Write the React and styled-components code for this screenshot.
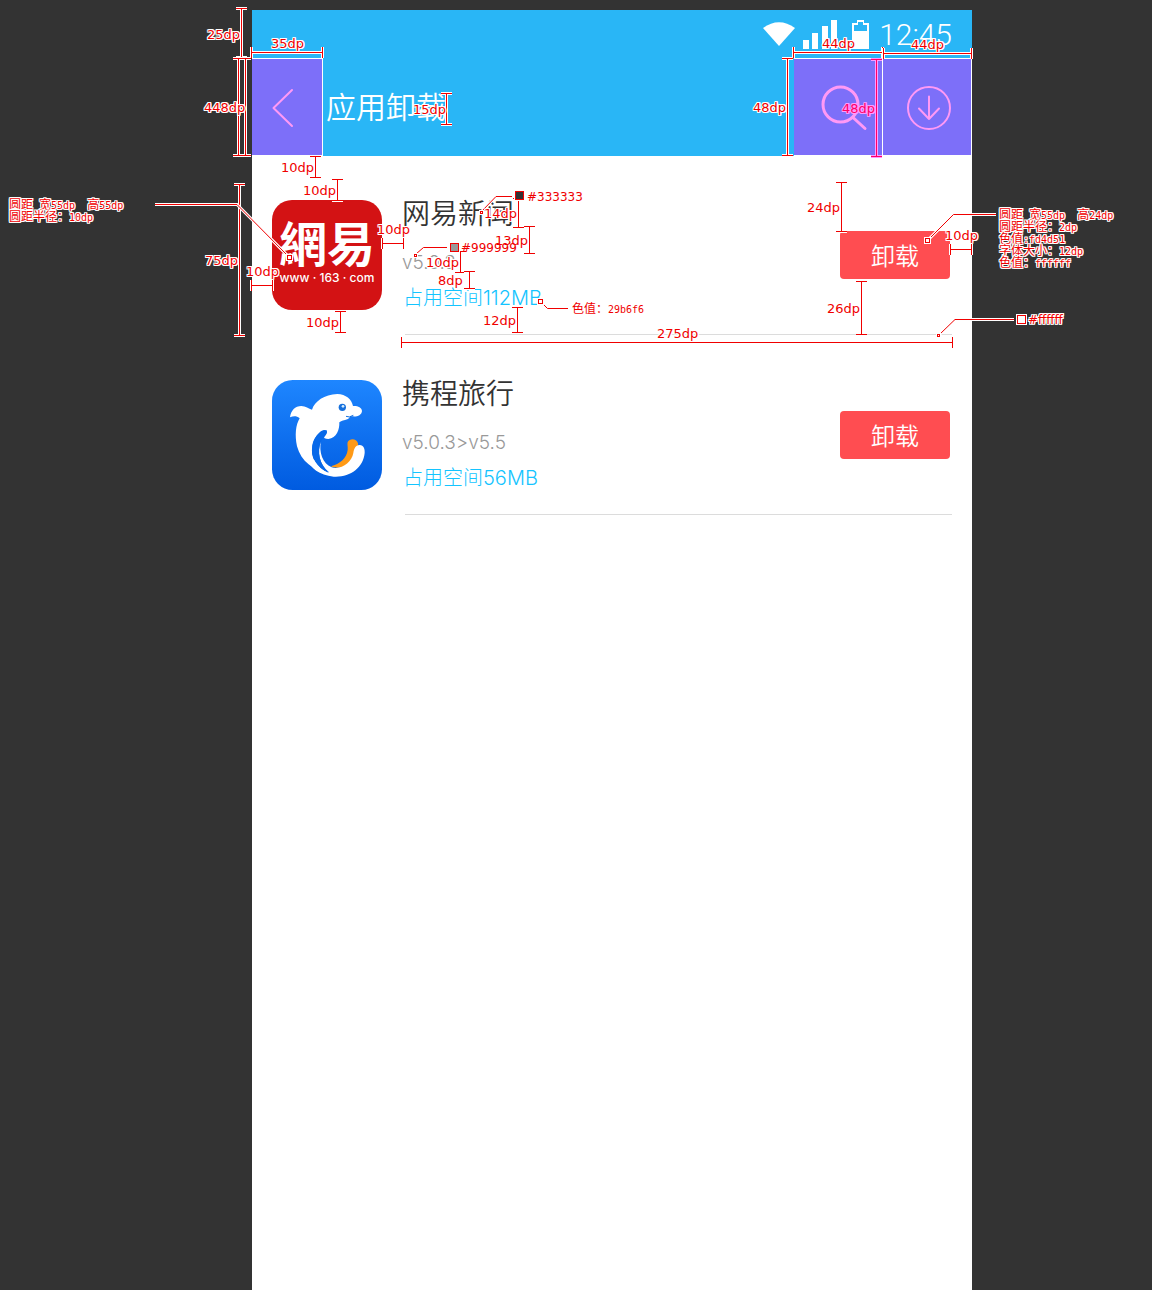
import React from "react";
import styled, { createGlobalStyle, css } from "styled-components";

const GlobalStyle = createGlobalStyle`
  *, *::before, *::after { box-sizing: border-box; }
  body { margin: 0; background: #333333; }
  h1, h2, p, ul { margin: 0; padding: 0; font-weight: 400; }
  button { border: 0; padding: 0; font: inherit; cursor: pointer; }
`;

const sans = `"Noto Sans CJK SC", "Noto Sans", sans-serif`;
const mixed = `Inter, "Noto Sans CJK SC", sans-serif`;

/* ---------- app screen ---------- */

const Page = styled.div`
  position: relative;
  min-height: 100vh;
  min-width: 900px;
  display: flex;
  padding: 10px 180px 0 252px;
  overflow: hidden;
  font-family: ${sans};
`;

const Screen = styled.main`
  flex: 1;
  min-width: 0;
  background: #ffffff;
`;

const Header = styled.header`
  margin-bottom: -1px;
  background: #29b6f6;
`;

const StatusBar = styled.div`
  display: flex;
  justify-content: flex-end;
  align-items: center;
  height: 48px;
  padding: 2px 20px 0 0;
  color: #ffffff;
`;

const Clock = styled.time`
  margin-left: 9px;
  font: 300 30px/46px Roboto, sans-serif;
`;

const NavBar = styled.div`
  display: flex;
  height: 98px;
`;

const NavButton = styled.button`
  display: flex;
  align-items: center;
  justify-content: center;
  width: ${(p) => p.$width}px;
  padding: 2px 0 0 ${(p) => p.$inset || 0}px;
  background: #7d6ff9;
  border: solid #ffffff;
  border-width: 1px 1px 1px 0;
`;

const BackButton = styled(NavButton)`
  justify-content: flex-start;
`;

const ScreenTitle = styled.h1`
  flex: 1;
  padding-left: 3px;
  color: #ffffff;
  font-size: 30px;
  font-weight: 350;
  line-height: 94px;
`;

const AppList = styled.ul`
  list-style: none;
`;

const AppRow = styled.li`
  display: grid;
  grid-template-columns: 110px 1fr auto;
  column-gap: 20px;
  padding: 45px 20px 0;
`;

const AppInfo = styled.div`
  display: flex;
  flex-direction: column;
`;

const AppName = styled.h2`
  color: #333333;
  font-size: 28px;
  font-weight: 350;
  line-height: 24px;
`;

const Version = styled.p`
  margin-top: 29px;
  color: #999999;
  font: 300 19px/20px ${mixed};
`;

const Space = styled.p`
  margin-top: 15px;
  padding-left: 1px;
  color: #14c4ff;
  font: 300 20px/20px ${mixed};
`;

const UninstallButton = styled.button`
  align-self: center;
  width: 110px;
  height: 48px;
  margin-right: 2px;
  border-radius: 4px;
  background: #ff4d51;
  color: #ffffff;
  font-size: 24px;
  font-weight: 350;
  line-height: 48px;
`;

const Divider = styled.hr`
  grid-column: 2 / -1;
  width: auto;
  height: 1px;
  margin: 24px 0 0 3px;
  border: 0;
  background: #dcdcdc;
`;

const NewsLogo = styled.div`
  display: flex;
  flex-direction: column;
  align-items: center;
  height: 110px;
  padding-top: 16px;
  border-radius: 20px;
  background: #d31214;
  color: #ffffff;
`;

const NewsMark = styled.span`
  font: 700 48px/50px "Noto Sans CJK TC", sans-serif;
`;

const NewsUrl = styled.span`
  margin-top: 3px;
  font: 500 12px/18px Inter, sans-serif;
  white-space: pre;
`;

const TravelLogo = styled.svg`
  display: block;
  width: 110px;
  height: 110px;
`;

/* ---------- measurement overlay ---------- */

const Layer = styled.div`
  position: absolute;
  top: 0;
  ${(p) => (p.$anchor === "right" ? "right: 0;" : "left: 0;")}
  width: 1152px;
  height: 400px;
  pointer-events: none;
`;

const Lines = styled.svg`
  position: absolute;
  inset: 0;
  width: 100%;
  height: 100%;
`;

const halo = (c) => css`
  text-shadow: 1px 0 ${c}, -1px 0 ${c}, 0 1px ${c}, 0 -1px ${c},
    1px 1px ${c}, -1px 1px ${c}, 1px -1px ${c}, -1px -1px ${c};
`;

const Label = styled.span`
  position: absolute;
  left: ${(p) => p.$x}px;
  top: ${(p) => p.$y - 8}px;
  color: ${(p) => (p.$accent ? "#ff0066" : "#f00000")};
  font: 400 ${(p) => p.$size || 13}px/16px "DejaVu Sans", sans-serif;
  white-space: pre;
  ${(p) => !p.$plain && halo(p.$accent ? "#ff99ff" : "#ffffff")}
`;

const Note = styled.div`
  position: absolute;
  left: ${(p) => p.$x}px;
  top: ${(p) => p.$y}px;
  color: #f00000;
  font: 400 12px/12px "Noto Sans CJK SC", sans-serif;
  white-space: pre;
  ${halo("#ffffff")}
`;

const NoteLine = styled.div`
  height: 12px;
`;

const Code = styled.span`
  font: 400 10px/12px "DejaVu Sans Mono", monospace;
`;

const V = (x, y1, y2) => `M${x} ${y1}V${y2}M${x - 5.5} ${y1}H${x + 5.5}M${x - 5.5} ${y2}H${x + 5.5}`;
const H = (y, x1, x2) => `M${x1} ${y}H${x2}M${x1} ${y - 5.5}V${y + 5.5}M${x2} ${y - 5.5}V${y + 5.5}`;

function Stroke({ d, red = "#f00000", edge = "#ffffff" }) {
  return (
    <g fill="none">
      <path d={d} stroke={edge} strokeWidth="3" />
      <path d={d} stroke={red} strokeWidth="1" />
    </g>
  );
}

function Handle({ x, y, size, fill = "#ffffff" }) {
  return (
    <g>
      <rect x={x - size / 2 - 1} y={y - size / 2 - 1} width={size + 2} height={size + 2} fill="#ffffff" />
      <rect x={x - size / 2 + 0.5} y={y - size / 2 + 0.5} width={size - 1} height={size - 1} fill={fill} stroke="#f00000" />
    </g>
  );
}

const leftRulers = [
  V(241.5, 8.5, 57.5), V(238.5, 58.5, 155.5), V(245.5, 58.5, 155.5),
  H(52.5, 251.5, 322.5), V(446.5, 93.5, 124.5), V(315.5, 156.5, 177.5),
  V(337.5, 179.5, 200.5), V(239.5, 184.5, 335.5), H(285.5, 251.5, 272.5),
  H(243.5, 382.5, 403.5), V(340.5, 311.5, 332.5), V(518.5, 198.5, 227.5),
  V(529.5, 226.5, 253.5), V(460.5, 251.5, 272.5), V(469.5, 271.5, 288.5),
  V(517.5, 307.5, 332.5), H(342.5, 401.5, 952.5),
];

const leftLeaders = [
  "M155 204.5H237L287 255",
  "M482 211L496 196.5H512",
  "M416 254L423.5 247.5H447",
  "M543 304L547.5 308.5H568",
];

const rightRulers = [
  H(52.5, 793.5, 882.5), H(53.5, 883.5, 971.5), V(787.5, 58.5, 155.5),
  V(841.5, 182.5, 231.5), V(861.5, 281.5, 334.5), H(249.5, 950.5, 971.5),
];

const rightLeaders = ["M930 238L953.5 214.5H996", "M940 334L955 319.5H1014"];

const leftLabels = [
  [207, 35, "25dp"], [271, 44, "35dp"], [204, 108, "448dp"], [413, 110, "15dp"],
  [281, 168, "10dp"], [303, 191, "10dp"], [205, 261, "75dp"], [246, 272, "10dp"],
  [377, 230, "10dp"], [306, 323, "10dp"], [484, 214, "14dp"], [495, 241, "13dp"],
  [527, 197, "#333333"], [461, 248, "#999999"], [426, 263, "10dp"],
  [438, 281, "8dp"], [483, 321, "12dp"], [657, 334, "275dp"],
];

const rightLabels = [
  [822, 44, "44dp"], [911, 45, "44dp"], [753, 108, "48dp"], [807, 208, "24dp"],
  [827, 309, "26dp"], [945, 236, "10dp"], [1028, 320, "#ffffff"],
];

function Labels({ items }) {
  return items.map(([x, y, text], i) => (
    <Label key={i} $x={x} $y={y} $size={text[0] === "#" ? 12 : 13} $plain={text === "#999999"}>
      {text}
    </Label>
  ));
}

function Measurements() {
  return (
    <>
      <Layer>
        <Lines aria-hidden="true">
          {leftRulers.map((d) => <Stroke key={d} d={d} />)}
          {leftLeaders.map((d) => <Stroke key={d} d={d} />)}
          <Handle x={289.5} y={257.5} size={5} />
          <Handle x={481.5} y={212.5} size={3} />
          <Handle x={415.5} y={255.5} size={3} />
          <Handle x={540.5} y={301.5} size={5} />
          <Handle x={519.5} y={195.5} size={9} fill="#333333" />
          <Handle x={454.5} y={247.5} size={9} fill="#999999" />
        </Lines>
        <Labels items={leftLabels} />
        <Note $x={572} $y={302}>色值：<Code>29b6f6</Code></Note>
        <Note $x={9} $y={198}>
          <NoteLine>圆距<Code> </Code>宽<Code>55dp  </Code>高<Code>55dp</Code></NoteLine>
          <NoteLine>圆距半径：<Code>10dp</Code></NoteLine>
        </Note>
      </Layer>
      <Layer $anchor="right">
        <Lines aria-hidden="true">
          {rightRulers.map((d) => <Stroke key={d} d={d} />)}
          {rightLeaders.map((d) => <Stroke key={d} d={d} />)}
          <Stroke d={V(876.5, 59.5, 156.5)} red="#ff0066" edge="#ff99ff" />
          <Handle x={927.5} y={240.5} size={5} />
          <Handle x={938.5} y={335.5} size={3} />
          <Handle x={1021.5} y={319.5} size={9} />
        </Lines>
        <Labels items={rightLabels} />
        <Label $x={842} $y={109} $accent>48dp</Label>
        <Note $x={999} $y={208}>
          <NoteLine>圆距<Code> </Code>宽<Code>55dp  </Code>高<Code>24dp</Code></NoteLine>
          <NoteLine>圆距半径：<Code>2dp</Code></NoteLine>
          <NoteLine>色值<Code>:fd4d51</Code></NoteLine>
          <NoteLine>字体大小：<Code>12dp</Code></NoteLine>
          <NoteLine>色值：<Code>ffffff</Code></NoteLine>
        </Note>
      </Layer>
    </>
  );
}

/* ---------- icons ---------- */

function StatusIcons() {
  return (
    <svg width="108" height="32" viewBox="763 20 108 32" fill="#ffffff" aria-hidden="true">
      <path d="M764 29Q780 17.500 796 29L780 47Z" />
      <path d="M804 41h6v9h-6zM813 34h6v16h-6zM823 27h6v23h-6zM832 21h6v29h-6z" />
      <path fillRule="evenodd" d="M853 24h5v-3h7v3h5v26h-17zM855 26v6h13v-6h-4v-3h-5v3z" />
    </svg>
  );
}

function BackIcon() {
  return (
    <svg width="24" height="42" viewBox="0 0 24 42" fill="none" stroke="#ff99f5" strokeWidth="2" aria-hidden="true">
      <path d="M20 3L1.500 21L20 39" strokeLinejoin="round" strokeLinecap="round" />
    </svg>
  );
}

function SearchIcon() {
  return (
    <svg width="50" height="50" viewBox="814 83 50 50" overflow="visible" fill="none" stroke="#ff99f5" strokeWidth="3" aria-hidden="true">
      <circle cx="839.500" cy="104.500" r="17.500" />
      <path d="M852 117.500L864 128.500" strokeLinecap="round" />
    </svg>
  );
}

function DownloadIcon() {
  return (
    <svg width="46" height="46" viewBox="0 0 46 46" fill="none" stroke="#ff99f5" strokeWidth="2" aria-hidden="true">
      <circle cx="23" cy="23" r="21" />
      <path d="M23 11.500V34M13 23.500L23 34L33 23.500" strokeLinecap="round" strokeLinejoin="round" />
    </svg>
  );
}

function DolphinLogo() {
  return (
    <TravelLogo viewBox="36 30 330 330" role="img" aria-label="携程旅行">
      <defs>
        <linearGradient id="sea" x1="0" y1="0" x2="0" y2="1">
          <stop offset="0" stopColor="#1e86ff" />
          <stop offset="1" stopColor="#005be0" />
        </linearGradient>
      </defs>
      <rect x="36" y="30" width="330" height="330" rx="62" fill="url(#sea)" />
      <path
        fill="#ffffff"
        d="M90 142C93 121 105 108 124 108C137 109 146 116 156 119C164 94 193 73 232 72C258 73 275 88 279 108C293 107 305 112 306 123C305 136 291 141 276 139C266 139 271 145 262 148C252 151 245 152 238 157C239 179 230 204 205 207C196 207 190 204 191 198C197 194 203 187 200 181C181 179 160 203 157 227C151 261 166 291 207 312C160 301 123 274 111 229C104 195 107 165 119 145C109 137 101 138 90 142Z"
      />
      <path fill="#ff9a16" d="M213 289C239 282 260 265 263 240C264 229 261 223 263 216C270 204 290 206 294 220C297 239 290 267 270 283C252 295 229 296 213 289Z" />
      <path
        fill="#ffffff"
        d="M183 214C176 246 188 281 215 292C244 300 275 278 280 249C282 237 286 225 299 225C311 226 315 237 314 249C310 294 269 323 221 320C178 316 150 294 144 268L165 270C174 288 188 301 207 307C177 282 170 245 183 214Z"
      />
      <path fill="#0869e9" d="M157 227C151 261 169 291 207 309C178 286 171 245 183 214C187 207 200 196 201 187C199 177 187 179 178 188C167 198 160 211 157 227Z" />
      <circle cx="247" cy="112" r="11" fill="#1670dc" />
      <circle cx="249" cy="109" r="4" fill="#d4ecff" />
      <path d="M258 139Q267 144 280 136" fill="none" stroke="#1670dc" strokeWidth="3" />
    </TravelLogo>
  );
}

function NeteaseLogo() {
  return (
    <NewsLogo>
      <NewsMark>網易</NewsMark>
      <NewsUrl>www · 163 · com</NewsUrl>
    </NewsLogo>
  );
}

const apps = [
  { name: "网易新闻", version: "v5.0.3", size: "112MB", Logo: NeteaseLogo },
  { name: "携程旅行", version: "v5.0.3>v5.5", size: "56MB", Logo: DolphinLogo },
];

export default function App() {
  return (
    <Page>
      <GlobalStyle />
      <Screen>
        <Header>
          <StatusBar>
            <StatusIcons />
            <Clock>12:45</Clock>
          </StatusBar>
          <NavBar>
            <BackButton $width={71} $inset={20} aria-label="返回"><BackIcon /></BackButton>
            <ScreenTitle>应用卸载</ScreenTitle>
            <NavButton $width={89} $inset={4} aria-label="搜索"><SearchIcon /></NavButton>
            <NavButton $width={89} $inset={4} aria-label="下载"><DownloadIcon /></NavButton>
          </NavBar>
        </Header>
        <AppList>
          {apps.map(({ name, version, size, Logo }) => (
            <AppRow key={name}>
              <Logo />
              <AppInfo>
                <AppName>{name}</AppName>
                <Version>{version}</Version>
                <Space>占用空间{size}</Space>
              </AppInfo>
              <UninstallButton>卸载</UninstallButton>
              <Divider />
            </AppRow>
          ))}
        </AppList>
      </Screen>
      <Measurements />
    </Page>
  );
}
